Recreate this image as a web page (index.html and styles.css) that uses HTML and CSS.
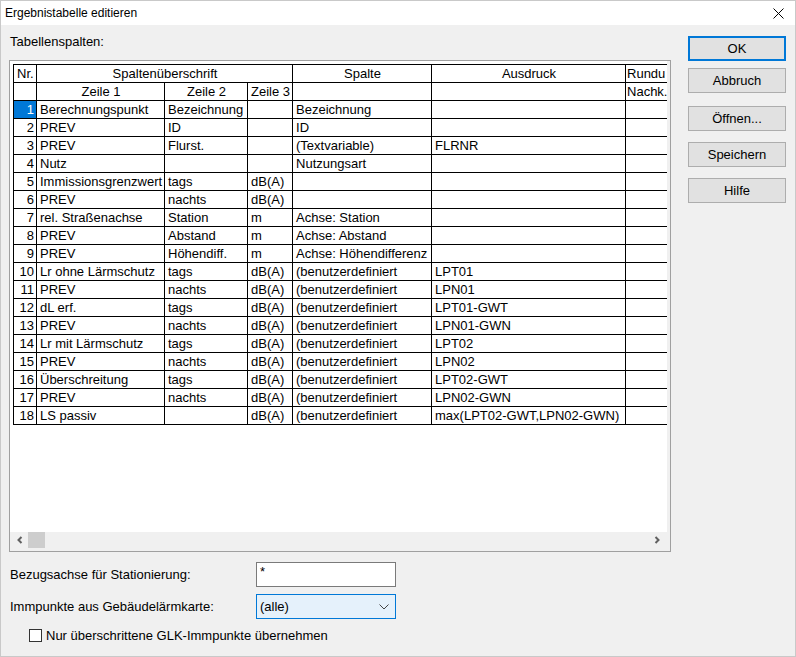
FILE: index.html
```html
<!DOCTYPE html>
<html lang="de">
<head>
    <meta charset="UTF-8">
    <title>Ergebnistabelle editieren</title>
    <link rel="stylesheet" href="styles.css">
</head>
<body>
<div class="fenster">
    <div class="titelleiste">
        <span class="titel">Ergebnistabelle editieren</span>
        <svg class="schliessen" width="11" height="11" viewBox="0 0 11 11">
            <path d="M0.5 0.5 L10.5 10.5 M10.5 0.5 L0.5 10.5" stroke="#000" stroke-width="1" fill="none"/>
        </svg>
    </div>
    <div class="inhalt">
        <div class="links">
            <div class="beschriftung">Tabellenspalten:</div>
            <div class="gitterbox">
                <div class="gitter">
                    <table class="tabelle">
                        <colgroup>
                            <col class="c-nr"><col class="c-z1"><col class="c-z2"><col class="c-z3">
                            <col class="c-sp"><col class="c-aus"><col class="c-rund">
                        </colgroup>
                        <tr>
                            <td>Nr.</td>
                            <td colspan="3" class="mitte">Spaltenüberschrift</td>
                            <td class="mitte">Spalte</td>
                            <td class="mitte">Ausdruck</td>
                            <td class="rund">Rundu</td>
                        </tr>
                        <tr>
                            <td></td>
                            <td class="mitte">Zeile 1</td>
                            <td class="mitte">Zeile 2</td>
                            <td class="mitte">Zeile 3</td>
                            <td></td>
                            <td></td>
                            <td class="rund">Nachk.</td>
                        </tr>
                        <tr><td class="nr aktiv">1</td><td>Berechnungspunkt</td><td>Bezeichnung</td><td></td><td>Bezeichnung</td><td></td><td></td></tr>
                        <tr><td class="nr">2</td><td>PREV</td><td>ID</td><td></td><td>ID</td><td></td><td></td></tr>
                        <tr><td class="nr">3</td><td>PREV</td><td>Flurst.</td><td></td><td>(Textvariable)</td><td>FLRNR</td><td></td></tr>
                        <tr><td class="nr">4</td><td>Nutz</td><td></td><td></td><td>Nutzungsart</td><td></td><td></td></tr>
                        <tr><td class="nr">5</td><td>Immissionsgrenzwert</td><td>tags</td><td>dB(A)</td><td></td><td></td><td></td></tr>
                        <tr><td class="nr">6</td><td>PREV</td><td>nachts</td><td>dB(A)</td><td></td><td></td><td></td></tr>
                        <tr><td class="nr">7</td><td>rel. Straßenachse</td><td>Station</td><td>m</td><td>Achse: Station</td><td></td><td></td></tr>
                        <tr><td class="nr">8</td><td>PREV</td><td>Abstand</td><td>m</td><td>Achse: Abstand</td><td></td><td></td></tr>
                        <tr><td class="nr">9</td><td>PREV</td><td>Höhendiff.</td><td>m</td><td>Achse: Höhendifferenz</td><td></td><td></td></tr>
                        <tr><td class="nr">10</td><td>Lr ohne Lärmschutz</td><td>tags</td><td>dB(A)</td><td>(benutzerdefiniert</td><td>LPT01</td><td></td></tr>
                        <tr><td class="nr">11</td><td>PREV</td><td>nachts</td><td>dB(A)</td><td>(benutzerdefiniert</td><td>LPN01</td><td></td></tr>
                        <tr><td class="nr">12</td><td>dL erf.</td><td>tags</td><td>dB(A)</td><td>(benutzerdefiniert</td><td>LPT01-GWT</td><td></td></tr>
                        <tr><td class="nr">13</td><td>PREV</td><td>nachts</td><td>dB(A)</td><td>(benutzerdefiniert</td><td>LPN01-GWN</td><td></td></tr>
                        <tr><td class="nr">14</td><td>Lr mit Lärmschutz</td><td>tags</td><td>dB(A)</td><td>(benutzerdefiniert</td><td>LPT02</td><td></td></tr>
                        <tr><td class="nr">15</td><td>PREV</td><td>nachts</td><td>dB(A)</td><td>(benutzerdefiniert</td><td>LPN02</td><td></td></tr>
                        <tr><td class="nr">16</td><td>Überschreitung</td><td>tags</td><td>dB(A)</td><td>(benutzerdefiniert</td><td>LPT02-GWT</td><td></td></tr>
                        <tr><td class="nr">17</td><td>PREV</td><td>nachts</td><td>dB(A)</td><td>(benutzerdefiniert</td><td>LPN02-GWN</td><td></td></tr>
                        <tr><td class="nr">18</td><td>LS passiv</td><td></td><td>dB(A)</td><td>(benutzerdefiniert</td><td>max(LPT02-GWT,LPN02-GWN)</td><td></td></tr>
                    </table>
                </div>
                <div class="rollbalken">
                    <svg class="pfeil" width="8" height="8" viewBox="0 0 8 8">
                        <path d="M5.5 1 L2.5 4 L5.5 7" stroke="#606060" stroke-width="2" fill="none"/>
                    </svg>
                    <div class="daumen"></div>
                    <div class="luecke"></div>
                    <svg class="pfeil" width="8" height="8" viewBox="0 0 8 8">
                        <path d="M2.5 1 L5.5 4 L2.5 7" stroke="#606060" stroke-width="2" fill="none"/>
                    </svg>
                </div>
            </div>
            <div class="zeile zeile1">
                <label class="feldname">Bezugsachse für Stationierung:</label>
                <div class="textfeld">*</div>
            </div>
            <div class="zeile zeile2">
                <label class="feldname">Immpunkte aus Gebäudelärmkarte:</label>
                <div class="auswahl">
                    <span>(alle)</span>
                    <svg width="10" height="6" viewBox="0 0 10 6">
                        <path d="M0.5 0.5 L5 5 L9.5 0.5" stroke="#444" stroke-width="1" fill="none"/>
                    </svg>
                </div>
            </div>
            <div class="zeile zeile3">
                <div class="kaestchen"></div>
                <span>Nur überschrittene GLK-Immpunkte übernehmen</span>
            </div>
        </div>
        <div class="knoepfe">
            <button class="knopf ok">OK</button>
            <button class="knopf abbruch">Abbruch</button>
            <button class="knopf oeffnen">Öffnen...</button>
            <button class="knopf speichern">Speichern</button>
            <button class="knopf hilfe">Hilfe</button>
        </div>
    </div>
</div>
</body>
</html>
```

FILE: styles.css
```css
body {
    margin: 0;
    font-family: "Liberation Sans", Arial, sans-serif;
    font-size: 13px;
    color: #000;
}
.fenster {
    box-sizing: border-box;
    width: 796px;
    height: 657px;
    background-color: #f0f0f0;
    border: 1px solid #c9c9c9;
}
.titelleiste {
    height: 24px;
    background-color: #fff;
    display: flex;
    align-items: center;
    justify-content: space-between;
    padding: 0 11px 0 4px;
}
.titel {
    font-size: 12px;
}
.inhalt {
    display: flex;
}
.links {
    margin-left: 8px;
    width: 662px;
}
.beschriftung {
    margin-top: 9px;
    line-height: 16px;
    padding-left: 1px;
}
.gitterbox {
    box-sizing: border-box;
    margin-top: 10px;
    width: 662px;
    height: 492px;
    border: 1px solid #a0a0a0;
    padding: 0 3px 3px 0;
    display: flex;
    flex-direction: column;
}
.gitter {
    height: 471px;
    background-color: #fff;
    overflow: hidden;
    padding: 3px 0 0 3px;
    box-sizing: border-box;
}
.tabelle {
    border-collapse: collapse;
    table-layout: fixed;
    width: 673px;
}
.tabelle td {
    border: 1px solid #000;
    padding: 0 2px 0 3px;
    height: 17px;
    line-height: 17px;
    white-space: nowrap;
    overflow: hidden;
}
.c-nr { width: 23px; }
.c-z1 { width: 128px; }
.c-z2 { width: 83px; }
.c-z3 { width: 45px; }
.c-sp { width: 139px; }
.c-aus { width: 194px; }
.c-rund { width: 61px; }
.tabelle td.mitte {
    text-align: center;
}
.tabelle td.rund {
    padding-left: 1px;
}
.tabelle td.nr {
    text-align: right;
    padding: 0 2px 0 0;
}
.tabelle td.aktiv {
    background-color: #0078d7;
    color: #fff;
}
.rollbalken {
    height: 16px;
    display: flex;
    align-items: center;
}
.pfeil {
    margin: 0 6px 0 6px;
}
.daumen {
    width: 17px;
    height: 16px;
    background-color: #cdcdcd;
    margin-left: -2px;
}
.luecke {
    flex: 1;
}
.zeile {
    display: flex;
    align-items: center;
    height: 25px;
}
.zeile1 {
    margin-top: 10px;
}
.zeile2 {
    margin-top: 7px;
}
.zeile3 {
    margin-top: 8px;
    height: 17px;
    padding-left: 20px;
}
.feldname {
    width: 246px;
    padding-left: 1px;
}
.textfeld {
    box-sizing: border-box;
    width: 140px;
    height: 25px;
    background-color: #fff;
    border: 1px solid #7a7a7a;
    padding: 1px 0 0 3px;
    line-height: 16px;
}
.auswahl {
    box-sizing: border-box;
    width: 140px;
    height: 25px;
    background-color: #e5f1fb;
    border: 1px solid #0078d7;
    display: flex;
    align-items: center;
    justify-content: space-between;
    padding: 0 6px 0 3px;
}
.kaestchen {
    box-sizing: border-box;
    width: 13px;
    height: 13px;
    border: 1px solid #333;
    background-color: #fff;
    margin-right: 4px;
}
.knoepfe {
    margin-left: 17px;
    margin-top: 11px;
    display: flex;
    flex-direction: column;
}
.knopf {
    box-sizing: border-box;
    width: 98px;
    height: 25px;
    background-color: #e1e1e1;
    border: 1px solid #adadad;
    font-family: "Liberation Sans", Arial, sans-serif;
    font-size: 13px;
    color: #000;
    padding: 0;
}
.ok {
    border: 2px solid #0078d7;
}
.abbruch { margin-top: 7px; }
.oeffnen { margin-top: 13px; }
.speichern { margin-top: 11px; }
.hilfe { margin-top: 11px; }
```
